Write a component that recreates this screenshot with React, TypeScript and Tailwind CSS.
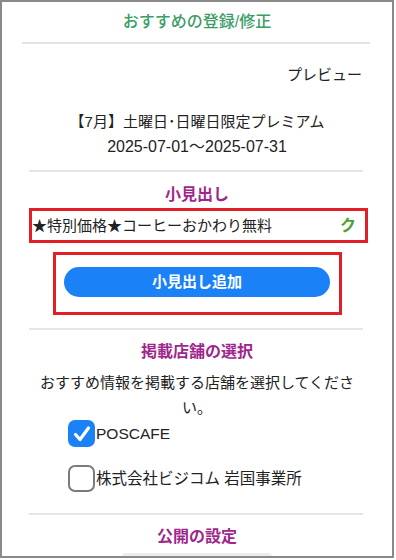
import React from "react";

const font = { fontFamily: '"Liberation Sans", "Noto Sans CJK JP", sans-serif' };

function Divider({ wide }: { wide?: boolean }) {
  return (
    <div
      className={
        wide
          ? "ml-[20px] h-[2px] w-[348px] bg-[#e3e3e3]"
          : "ml-[27px] h-[2px] w-[334px] bg-[#e6e6e6]"
      }
    />
  );
}

function SectionTitle({ children }: { children: React.ReactNode }) {
  return (
    <p className="text-center text-[16px] leading-[22px] font-bold text-[#a0268c]">
      {children}
    </p>
  );
}

function CheckRow({ checked, label }: { checked?: boolean; label: string }) {
  return (
    <div className="flex items-center">
      {checked ? (
        <span className="flex h-[27px] w-[27px] items-center justify-center rounded-[7px] bg-[#1a82f6]">
          <svg width="20" height="20" viewBox="0 0 20 20" fill="none">
            <path
              d="M3.5 10.5 L8 15.5 L16.5 4"
              stroke="white"
              strokeWidth="3.2"
              strokeLinecap="round"
              strokeLinejoin="round"
            />
          </svg>
        </span>
      ) : (
        <span className="h-[27px] w-[27px] rounded-[7px] border-[2.5px] border-[#7b7b7b] bg-white" />
      )}
      <span className="ml-[1px] text-[15.5px] leading-[22px] text-[#222]">{label}</span>
    </div>
  );
}

export default function App() {
  return (
    <div className="bg-white" style={font}>
      <div className="h-[558px] w-[394px] overflow-hidden border-2 border-[#8a8a8a] bg-white">
        {/* ヘッダー */}
        <p className="pt-[8px] text-center text-[16px] leading-[24px] font-medium text-[#3b9d68]">
          おすすめの登録/修正
        </p>
        <div className="mt-[8px]">
          <Divider wide />
        </div>

        {/* プレビュー */}
        <p className="mt-[20px] pr-[30px] text-right text-[15px] leading-[22px] text-[#222]">
          プレビュー
        </p>
        <div className="mt-[23px] text-center text-[15px] leading-[25px] text-[#222]">
          <p>【7月】土曜日･日曜日限定プレミアム</p>
          <p className="text-[16px]">2025-07-01～2025-07-31</p>
        </div>

        <div className="mt-[11px]">
          <Divider />
        </div>

        {/* 小見出し */}
        <div className="mt-[12px]">
          <SectionTitle>小見出し</SectionTitle>
        </div>
        <div className="ml-[27px] mt-[2px] flex h-[35px] w-[339px] items-center justify-between border-[3px] border-[#e21f26] pr-[9px]">
          <span className="text-[15px] leading-[22px] text-[#222]">
            ★特別価格★コーヒーおかわり無料
          </span>
          <span className="text-[16px] font-bold text-[#4ea12e]">ク</span>
        </div>
        <div className="mx-auto mt-[9px] flex h-[63px] w-[289px] justify-center border-[3px] border-[#e21f26] pt-[12px]">
          <button className="h-[30px] w-[266px] rounded-full bg-[#1a82f6] text-[15px] font-bold text-white">
            小見出し追加
          </button>
        </div>

        <div className="mt-[13px]">
          <Divider />
        </div>

        {/* 掲載店舗の選択 */}
        <div className="mt-[11px]">
          <SectionTitle>掲載店舗の選択</SectionTitle>
        </div>
        <p className="mx-auto mt-[7px] w-[330px] text-center text-[15px] leading-[25px] text-[#222]">
          おすすめ情報を掲載する店舗を選択してください。
        </p>
        <div className="ml-[66px] flex flex-col gap-[18px]">
          <CheckRow checked label="POSCAFE" />
          <CheckRow label="株式会社ビジコム 岩国事業所" />
        </div>

        <div className="mt-[21px]">
          <Divider />
        </div>

        {/* 公開の設定 */}
        <div className="mt-[11px]">
          <SectionTitle>公開の設定</SectionTitle>
        </div>
        <div className="mx-auto mt-[5px] h-[4px] w-[150px] rounded-t-full bg-[#ededed]" />
      </div>
    </div>
  );
}
